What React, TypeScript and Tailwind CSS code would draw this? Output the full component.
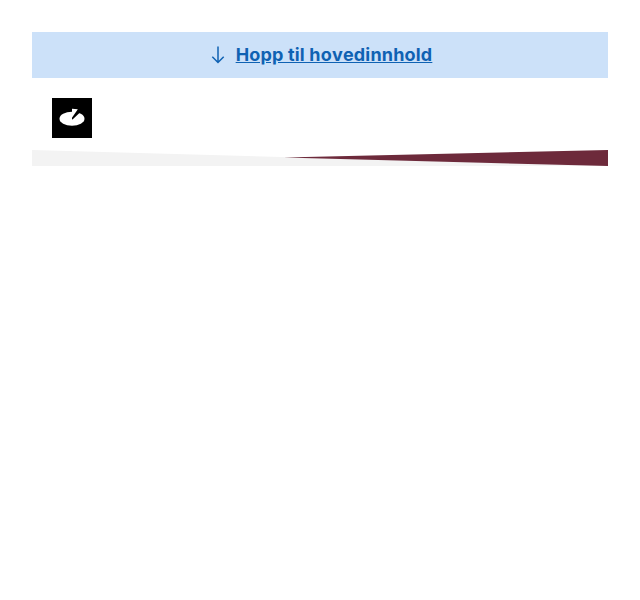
export default function App() {
  return (
    <div className="min-h-[600px] bg-white p-8 font-['Inter',sans-serif]">
      <a href="#main" className="flex h-[46px] items-center justify-center bg-[#cce1f9] pb-px pl-0.5 text-[18px] font-bold tracking-[0.01em] text-[#0f62b3]">
        <svg className="mr-2.5 h-[18px] w-4" viewBox="0 0 16 18" fill="none" stroke="currentColor" strokeWidth="1.5"><path d="M8 0.500V16.500M2.300 10.800L8 16.500L13.700 10.800" /></svg>
        <span className="underline [font-kerning:none]">Hopp til hovedinnhold</span>
      </a>
      <header className="px-5 pt-5 pb-3">
        <svg className="block h-10 w-10" viewBox="0 0 40 40">
          <rect width="40" height="40" />
          <ellipse cx="20" cy="20.800" rx="12.500" ry="7" fill="#fff" />
          <path d="M20 21.500V12H26L28.200 14.300L20.800 21.200z" />
          <path fill="#fff" d="M20 10.700L25.800 11.200L20 19.800z" />
        </svg>
      </header>
      <svg className="block h-4 w-full" viewBox="0 0 576 16" preserveAspectRatio="none"><path fill="#f3f3f3" d="M0 0L576 16H0z" /><path fill="#6d2a3b" d="M252 7.500L576 0V16z" /></svg>
    </div>
  );
}
